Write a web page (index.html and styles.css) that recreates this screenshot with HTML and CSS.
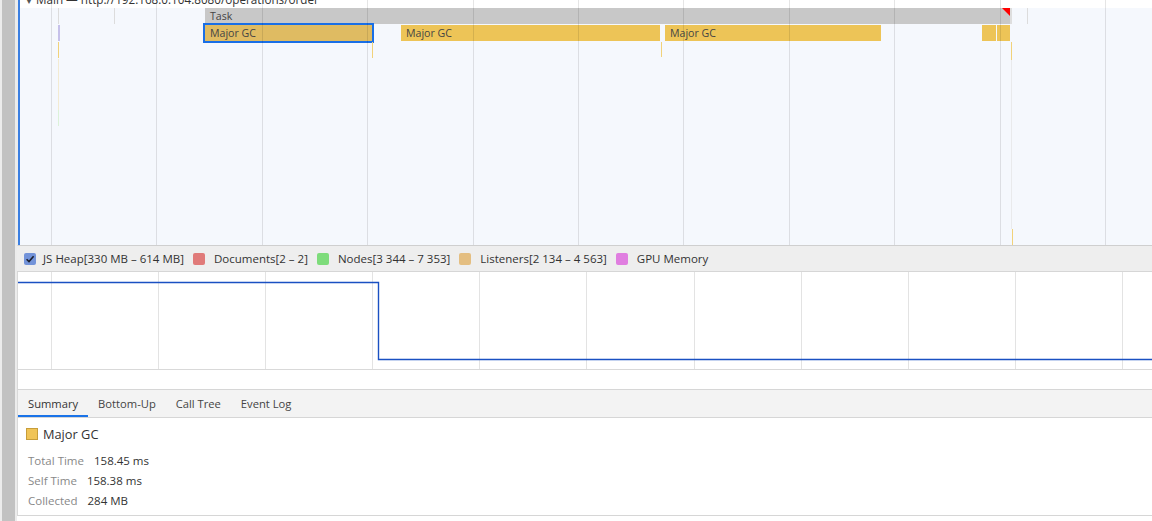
FILE: index.html
```html
<!DOCTYPE html>
<html>
<head>
<meta charset="utf-8">
<link rel="stylesheet" href="styles.css">
</head>
<body>
<div class="strip"></div>
<div class="main">
  <div class="flame">
    <div class="flame-inner">
      <div class="track-header"><span class="track-title"><span class="tri">▼</span> Main — http://192.168.0.104:8080/operations/order</span></div>
      <div class="flame-body"></div>

      <div class="ev tick row-task" style="left:38px"></div>
      <div class="ev tick row-task" style="left:94px"></div>
      <div class="ev tick row-task" style="left:1007px"></div>
      <div class="ev task" style="left:185px;width:806px"><span class="bar-label">Task</span><span class="warn"></span></div>
      <div class="ev task-tail" style="left:990px"></div>

      <div class="ev gc selected" style="left:185px;width:167px"><span class="bar-label">Major GC</span></div>
      <div class="ev gc" style="left:381px;width:259px"><span class="bar-label">Major GC</span></div>
      <div class="ev gc" style="left:645px;width:216px"><span class="bar-label">Major GC</span></div>
      <div class="ev gc" style="left:962px;width:14px"></div>
      <div class="ev gc" style="left:977px;width:13px"></div>

      <div class="ev mark mark-purple" style="left:38px;top:25px;height:16px"></div>
      <div class="ev mark mark-yellow" style="left:38px;top:42px;height:16px"></div>
      <div class="ev mark mark-cream" style="left:38px;top:59px;height:51px"></div>
      <div class="ev mark mark-green" style="left:38px;top:110px;height:16px"></div>
      <div class="ev mark mark-yellow" style="left:352px;top:42px;height:16px"></div>
      <div class="ev mark mark-yellow" style="left:641px;top:42px;height:15px"></div>
      <div class="ev mark mark-yellow" style="left:991px;top:42px;height:18px"></div>
      <div class="ev mark mark-faint" style="left:991px;top:60px;height:169px"></div>
      <div class="ev mark mark-yellow" style="left:992px;top:229px;height:16px"></div>

      <div class="grid flame-grid"><i></i><i></i><i></i><i></i><i></i><i></i><i></i><i></i><i></i><i></i><i></i><i></i></div>
    </div>
  </div>

  <div class="legend">
    <span class="item">
      <svg class="check" width="12" height="12" viewBox="0 0 12 12"><rect x="0" y="0" width="12" height="12" rx="2" fill="#7393d9"/><path d="M2.6 6.2 L5 8.6 L9.6 3.2" fill="none" stroke="#1b1f2e" stroke-width="1.6"/></svg>
      <span class="lbl first">JS Heap[330 MB – 614 MB]</span>
    </span>
    <span class="item"><span class="sw sw-docs"></span><span class="lbl">Documents[2 – 2]</span></span>
    <span class="item"><span class="sw sw-nodes"></span><span class="lbl">Nodes[3 344 – 7 353]</span></span>
    <span class="item"><span class="sw sw-list"></span><span class="lbl">Listeners[2 134 – 4 563]</span></span>
    <span class="item"><span class="sw sw-gpu"></span><span class="lbl">GPU Memory</span></span>
  </div>

  <div class="memory">
    <div class="grid mem-grid"><i></i><i></i><i></i><i></i><i></i><i></i><i></i><i></i><i></i><i></i><i></i></div>
    <svg class="mem-line" width="1134" height="97" viewBox="0 0 1134 97"><polyline points="0,10.5 360.5,10.5 360.5,87.5 1134,87.5" fill="none" stroke="#1a50c2" stroke-width="1.4"/></svg>
  </div>

  <div class="spacer"></div>

  <div class="tabs">
    <span class="tab active">Summary</span>
    <span class="tab">Bottom-Up</span>
    <span class="tab">Call Tree</span>
    <span class="tab">Event Log</span>
  </div>

  <div class="summary">
    <div class="sum-title"><span class="sum-sw"></span><span>Major GC</span></div>
    <div class="sum-row"><span class="k">Total Time</span><span class="v">158.45 ms</span></div>
    <div class="sum-row"><span class="k">Self Time</span><span class="v">158.38 ms</span></div>
    <div class="sum-row"><span class="k">Collected</span><span class="v">284 MB</span></div>
  </div>
</div>
</body>
</html>
```

FILE: styles.css
```css
* { box-sizing: border-box; }
html, body { margin: 0; padding: 0; }
body {
  width: 1152px;
  height: 521px;
  overflow: hidden;
  display: flex;
  background: #fff;
  color: #333;
  font-family: "Open Sans", "Noto Sans", sans-serif;
  font-size: 11.7px;
}
.strip {
  flex: none;
  width: 17px;
  background: #c2c2c2;
  border-left: 2px solid #ececec;
  border-right: 2px solid #ececec;
}
.main {
  flex: 1;
  min-width: 0;
  display: flex;
  flex-direction: column;
}

/* flame chart */
.flame {
  flex: none;
  height: 246px;
  display: flex;
  border-left: 1px solid #ececec;
  border-bottom: 1px solid #cfcfcf;
}
.flame-inner {
  flex: 1;
  position: relative;
  overflow: hidden;
  display: flex;
  flex-direction: column;
  border-left: 2px solid #3b7fe1;
}
.track-header {
  flex: none;
  height: 8px;
  overflow: hidden;
  background: #fff;
  padding-left: 5px;
}
.track-title {
  display: block;
  margin-top: -9px;
  line-height: 16px;
  white-space: nowrap;
  color: #333;
}
.tri { font-size: 8px; color: #555; }
.flame-body { flex: 1; background: #f5f8fd; }
.ev { position: absolute; }
.row-task { top: 8px; height: 16px; }
.tick { width: 1px; background: #dcdcdc; }
.task {
  top: 8px;
  height: 16px;
  background: #c8c8c8;
  overflow: hidden;
}
.task-tail { top: 8px; height: 16px; width: 2px; background: #dedede; }
.warn {
  position: absolute;
  top: 0;
  right: 1px;
  width: 8px;
  height: 8px;
  background: #f00;
  clip-path: polygon(0 0, 100% 0, 100% 100%);
}
.bar-label {
  display: block;
  padding-left: 5px;
  line-height: 16px;
  font-size: 10.6px;
  color: #444;
  white-space: nowrap;
}
.gc {
  top: 25px;
  height: 16px;
  background: #edc457;
  overflow: hidden;
}
.gc.selected {
  background: #dfbb62;
  outline: 2px solid #1a6fe6;
  overflow: visible;
}
.mark { width: 1px; }
.mark-purple { width: 2px; background: #c6c1ea; }
.mark-yellow { background: #f1d27a; }
.mark-cream { background: #f3ebd2; }
.mark-green { background: #dcf2d9; }
.mark-faint { background: #e9eaec; }

.grid {
  position: absolute;
  top: 0; left: 0; right: 0; bottom: 0;
  display: flex;
  pointer-events: none;
}
.grid i { flex: none; display: block; }
.flame-grid { padding-left: 31px; }
.flame-grid i { width: 105.4px; border-left: 1px solid rgba(0, 0, 0, 0.1); }
.mem-grid { padding-left: 33px; }
.mem-grid i { width: 107.1px; border-left: 1px solid #e3e3e3; }

/* legend */
.legend {
  flex: none;
  height: 26px;
  background: #eeeeee;
  border-bottom: 1px solid #d6d6d6;
  display: flex;
  align-items: center;
  padding-left: 7px;
  gap: 9px;
  color: #333;
  font-size: 11.5px;
  white-space: nowrap;
}
.item { display: flex; align-items: center; }
.check { display: block; flex: none; }
.sw { width: 12px; height: 12px; border-radius: 2px; flex: none; }
.sw-docs { background: #e07a79; }
.sw-nodes { background: #7edc7b; }
.sw-list { background: #e4be81; }
.sw-gpu { background: #e07ee0; }
.lbl { margin-left: 9px; }
.lbl.first { margin-left: 7px; }

/* memory chart */
.memory {
  flex: none;
  position: relative;
  height: 98px;
  background: #fff;
  border-left: 1px solid #d9d9d9;
  border-bottom: 1px solid #d9d9d9;
}
.mem-line { position: absolute; left: 0; top: 0; }

.spacer {
  flex: none;
  height: 20px;
  border-left: 1px solid #d9d9d9;
  border-bottom: 1px solid #d6d6d6;
}

/* tabs */
.tabs {
  flex: none;
  height: 28px;
  display: flex;
  background: #f3f3f3;
  border-left: 1px solid #d9d9d9;
  border-bottom: 1px solid #d6d6d6;
  font-size: 11.2px;
}
.tab {
  position: relative;
  display: flex;
  align-items: center;
  padding: 0 10px;
  color: #444;
}
.tab.active { color: #333; }
.tab.active::after {
  content: "";
  position: absolute;
  left: 0; right: 0; bottom: 0;
  height: 2px;
  background: #1a73e8;
}

/* summary */
.summary {
  flex: none;
  height: 98px;
  border-left: 1px solid #d9d9d9;
  border-bottom: 1px solid #d6d6d6;
  padding: 8px 0 0 0;
  font-size: 11.5px;
}
.sum-title {
  display: flex;
  align-items: center;
  height: 16px;
  padding-left: 8px;
  font-size: 12.8px;
  color: #333;
  margin-bottom: 8px;
}
.sum-sw {
  width: 12px;
  height: 12px;
  background: #f0c457;
  border: 1px solid #c79d3a;
  margin-right: 5px;
}
.sum-row {
  display: flex;
  height: 20px;
  align-items: center;
  padding-left: 10px;
}
.k { color: #888; margin-right: 10px; }
.v { color: #333; }
```
